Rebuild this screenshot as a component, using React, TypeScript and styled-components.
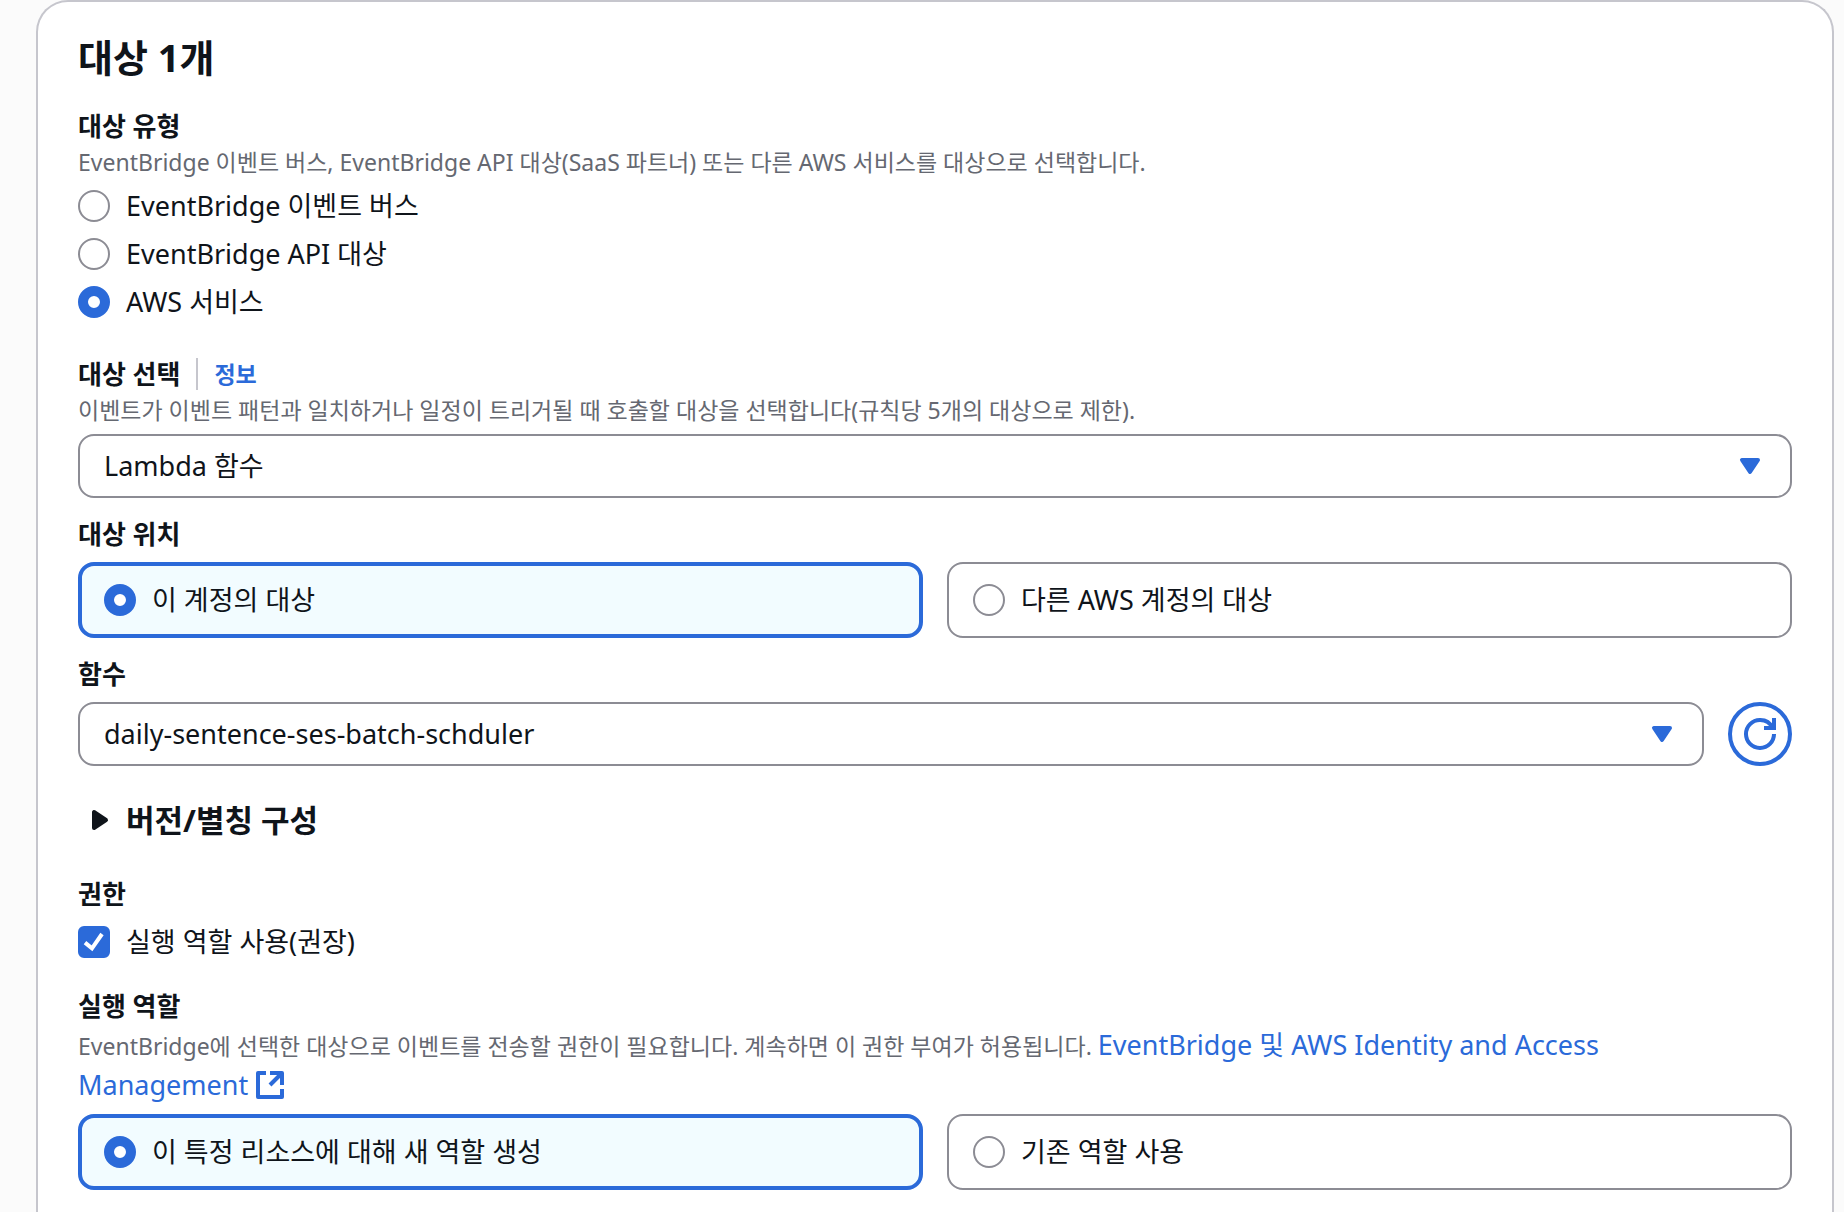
import React, { useState } from 'react';
import styled, { createGlobalStyle, css } from 'styled-components';

const color = {
  page: '#fbfbfb',
  surface: '#ffffff',
  text: '#0f141a',
  muted: '#656871',
  primary: '#2b6ad9',
  control: '#8c8c94',
  divider: '#c6c6cd',
  selected: '#f2fcff',
};

const GlobalStyle = createGlobalStyle`
  *, *::before, *::after {
    box-sizing: border-box;
  }
  body {
    margin: 0;
    background: ${color.page};
    color: ${color.text};
    font-family: 'Noto Sans', 'Noto Sans CJK KR', sans-serif;
    font-size: 27px;
    line-height: 40px;
  }
`;

const Page = styled.main`
  display: flex;
  min-height: 100vh;
  padding: 0 10px 0 36px;
`;

const Card = styled.section`
  flex: 1;
  min-width: 0;
  padding: 32px 40px 20px;
  background: ${color.surface};
  border: 2px solid ${color.divider};
  border-bottom: 0;
  border-radius: 32px 32px 0 0;
`;

const Title = styled.h2`
  margin: 0 0 26px;
  font-size: 38px;
  line-height: 46px;
  font-weight: 700;
`;

const Form = styled.form`
  display: flex;
  flex-direction: column;
  gap: 32px;
`;

const Group = styled.div<{ $gap: number }>`
  display: flex;
  flex-direction: column;
  gap: ${(p) => p.$gap}px;
`;

const Field = styled.div`
  display: flex;
  flex-direction: column;
  gap: 8px;
`;

const LabelRow = styled.div`
  display: flex;
  align-items: center;
`;

const labelText = css`
  font-size: 26px;
  line-height: 40px;
  font-weight: 700;
`;

const FieldLabel = styled.label`
  ${labelText}
`;

const GroupLabel = styled.div`
  ${labelText}
`;

const InfoLink = styled.a`
  margin-left: 16px;
  padding-left: 16px;
  border-left: 2px solid ${color.divider};
  color: ${color.primary};
  font-size: 23px;
  line-height: 32px;
  font-weight: 700;
  text-decoration: none;
`;

const Description = styled.p<{ $tall?: boolean }>`
  margin: 0;
  color: ${color.muted};
  font-size: 23px;
  line-height: ${(p) => (p.$tall ? 40 : 32)}px;
`;

const DocLink = styled.a`
  color: ${color.primary};
  font-size: 27px;
  line-height: 32px;
  text-decoration: none;
`;

const NoWrap = styled.span`
  white-space: nowrap;
`;

const Icon = styled.svg`
  width: 32px;
  height: 32px;
  flex: none;
  fill: none;
  stroke: currentColor;
  stroke-width: 2;
`;

const LinkIcon = styled(Icon)`
  margin-left: 6px;
  vertical-align: -6px;
`;

const ChoiceList = styled.div`
  display: flex;
  flex-direction: column;
  gap: 8px;
`;

const Choice = styled.label`
  display: flex;
  align-items: center;
  gap: 16px;
  align-self: flex-start;
`;

const Radio = styled.input`
  appearance: none;
  flex: none;
  width: 32px;
  height: 32px;
  margin: 0;
  background: ${color.surface};
  border: 2px solid ${color.control};
  border-radius: 50%;

  &:checked {
    border: 10px solid ${color.primary};
  }
`;

const CheckBox = styled.span`
  display: grid;
  flex: none;
  color: ${color.surface};

  > * {
    grid-area: 1 / 1;
  }
`;

const CheckInput = styled.input`
  appearance: none;
  width: 32px;
  height: 32px;
  margin: 0;
  background: ${color.surface};
  border: 2px solid ${color.control};
  border-radius: 6px;

  &:checked {
    background: ${color.primary};
    border-color: ${color.primary};
  }
`;

const CheckMark = styled(Icon)`
  pointer-events: none;
`;

const Tiles = styled.div`
  display: grid;
  grid-template-columns: 1fr 1fr;
  gap: 24px;
`;

const Tile = styled.label<{ $on: boolean }>`
  display: flex;
  align-items: center;
  gap: 16px;
  height: 76px;
  padding: 0 ${(p) => (p.$on ? 22 : 24)}px;
  background: ${(p) => (p.$on ? color.selected : color.surface)};
  border: ${(p) => (p.$on ? `4px solid ${color.primary}` : `2px solid ${color.control}`)};
  border-radius: 16px;
`;

const SelectBox = styled.div`
  display: grid;
  grid-template-columns: 1fr 58px;
  align-items: center;
  flex: 1;
  color: ${color.primary};
`;

const Select = styled.select`
  appearance: none;
  grid-area: 1 / 1 / 2 / 3;
  width: 100%;
  height: 64px;
  padding: 0 60px 0 24px;
  background: ${color.surface};
  border: 2px solid ${color.control};
  border-radius: 16px;
  color: ${color.text};
  font: inherit;
`;

const Caret = styled(Icon)`
  grid-area: 1 / 2;
  fill: currentColor;
  stroke-linejoin: round;
  pointer-events: none;
`;

const SelectRow = styled.div`
  display: flex;
  gap: 24px;
`;

const RoundButton = styled.button`
  display: grid;
  place-items: center;
  width: 64px;
  height: 64px;
  padding: 0;
  background: ${color.surface};
  border: 4px solid ${color.primary};
  border-radius: 50%;
  color: ${color.primary};
`;

const Expander = styled.button`
  display: flex;
  align-items: center;
  align-self: flex-start;
  gap: 10px;
  padding: 2px 6px;
  background: none;
  border: 0;
  color: ${color.text};
  font: inherit;
  font-size: 31px;
  line-height: 40px;
  font-weight: 700;
`;

const SolidIcon = styled(Icon)`
  fill: currentColor;
  stroke-linejoin: round;
`;

function DropDown({ id, options }: { id: string; options: string[] }) {
  return (
    <SelectBox>
      <Select id={id}>
        {options.map((o) => (
          <option key={o}>{o}</option>
        ))}
      </Select>
      <Caret viewBox="0 0 16 16" aria-hidden="true">
        <path d="M4 5h8l-4 6-4-6z" />
      </Caret>
    </SelectBox>
  );
}

function TileChoice({ name, labelId, options }: { name: string; labelId: string; options: string[] }) {
  const [value, setValue] = useState(options[0]);
  return (
    <Tiles role="radiogroup" aria-labelledby={labelId}>
      {options.map((o) => (
        <Tile key={o} $on={o === value}>
          <Radio type="radio" name={name} checked={o === value} onChange={() => setValue(o)} />
          <span>{o}</span>
        </Tile>
      ))}
    </Tiles>
  );
}

const targetTypes = ['EventBridge 이벤트 버스', 'EventBridge API 대상', 'AWS 서비스'];

export default function App() {
  const [type, setType] = useState(targetTypes[2]);
  const [useRole, setUseRole] = useState(true);

  return (
    <>
      <GlobalStyle />
      <Page lang="ko">
        <Card>
          <Title>대상 1개</Title>
          <Form onSubmit={(e) => e.preventDefault()}>
            <Field>
              <div>
                <GroupLabel id="type-label">대상 유형</GroupLabel>
                <Description>
                  EventBridge 이벤트 버스, EventBridge API 대상(SaaS 파트너) 또는 다른 AWS 서비스를 대상으로 선택합니다.
                </Description>
              </div>
              <ChoiceList role="radiogroup" aria-labelledby="type-label">
                {targetTypes.map((t) => (
                  <Choice key={t}>
                    <Radio type="radio" name="type" checked={t === type} onChange={() => setType(t)} />
                    <span>{t}</span>
                  </Choice>
                ))}
              </ChoiceList>
            </Field>

            <Group $gap={16}>
              <Field>
                <div>
                  <LabelRow>
                    <FieldLabel htmlFor="target">대상 선택</FieldLabel>
                    <InfoLink href="#info">정보</InfoLink>
                  </LabelRow>
                  <Description>
                    이벤트가 이벤트 패턴과 일치하거나 일정이 트리거될 때 호출할 대상을 선택합니다(규칙당 5개의 대상으로 제한).
                  </Description>
                </div>
                <DropDown id="target" options={['Lambda 함수']} />
              </Field>
              <Field>
                <GroupLabel id="place-label">대상 위치</GroupLabel>
                <TileChoice
                  name="place"
                  labelId="place-label"
                  options={['이 계정의 대상', '다른 AWS 계정의 대상']}
                />
              </Field>
              <Field>
                <FieldLabel htmlFor="function">함수</FieldLabel>
                <SelectRow>
                  <DropDown id="function" options={['daily-sentence-ses-batch-schduler']} />
                  <RoundButton type="button" aria-label="새로 고침">
                    <Icon viewBox="0 0 16 16" aria-hidden="true">
                      <path d="M10 5h5V0" />
                      <path d="M15 8a6.957 6.957 0 0 1-7 7 6.957 6.957 0 0 1-7-7 6.957 6.957 0 0 1 7-7 6.87 6.87 0 0 1 6.3 4" />
                    </Icon>
                  </RoundButton>
                </SelectRow>
              </Field>
            </Group>

            <Expander type="button" aria-expanded="false">
              <SolidIcon viewBox="0 0 16 16" aria-hidden="true">
                <path d="M5 4v8l6-4-6-4z" />
              </SolidIcon>
              버전/별칭 구성
            </Expander>

            <Group $gap={24}>
              <Field>
                <GroupLabel>권한</GroupLabel>
                <Choice>
                  <CheckBox>
                    <CheckInput type="checkbox" checked={useRole} onChange={(e) => setUseRole(e.target.checked)} />
                    <CheckMark viewBox="0 0 16 16" aria-hidden="true">
                      <path d="M3.5 8.3 7 11.2 12 4" />
                    </CheckMark>
                  </CheckBox>
                  <span>실행 역할 사용(권장)</span>
                </Choice>
              </Field>
              <Field>
                <div>
                  <GroupLabel id="role-label">실행 역할</GroupLabel>
                  <Description $tall>
                    EventBridge에 선택한 대상으로 이벤트를 전송할 권한이 필요합니다. 계속하면 이 권한 부여가 허용됩니다.{' '}
                    <DocLink href="#iam">
                      EventBridge 및 AWS Identity and Access{' '}
                      <NoWrap>
                        Management
                        <LinkIcon viewBox="0 0 16 16" strokeLinejoin="round" aria-hidden="true">
                          <path d="M6 2H2v12h12v-4" />
                          <path d="M8 2h6v6" />
                          <path d="m8 8 6-6" />
                        </LinkIcon>
                      </NoWrap>
                    </DocLink>
                  </Description>
                </div>
                <TileChoice
                  name="role"
                  labelId="role-label"
                  options={['이 특정 리소스에 대해 새 역할 생성', '기존 역할 사용']}
                />
              </Field>
            </Group>
          </Form>
        </Card>
      </Page>
    </>
  );
}
